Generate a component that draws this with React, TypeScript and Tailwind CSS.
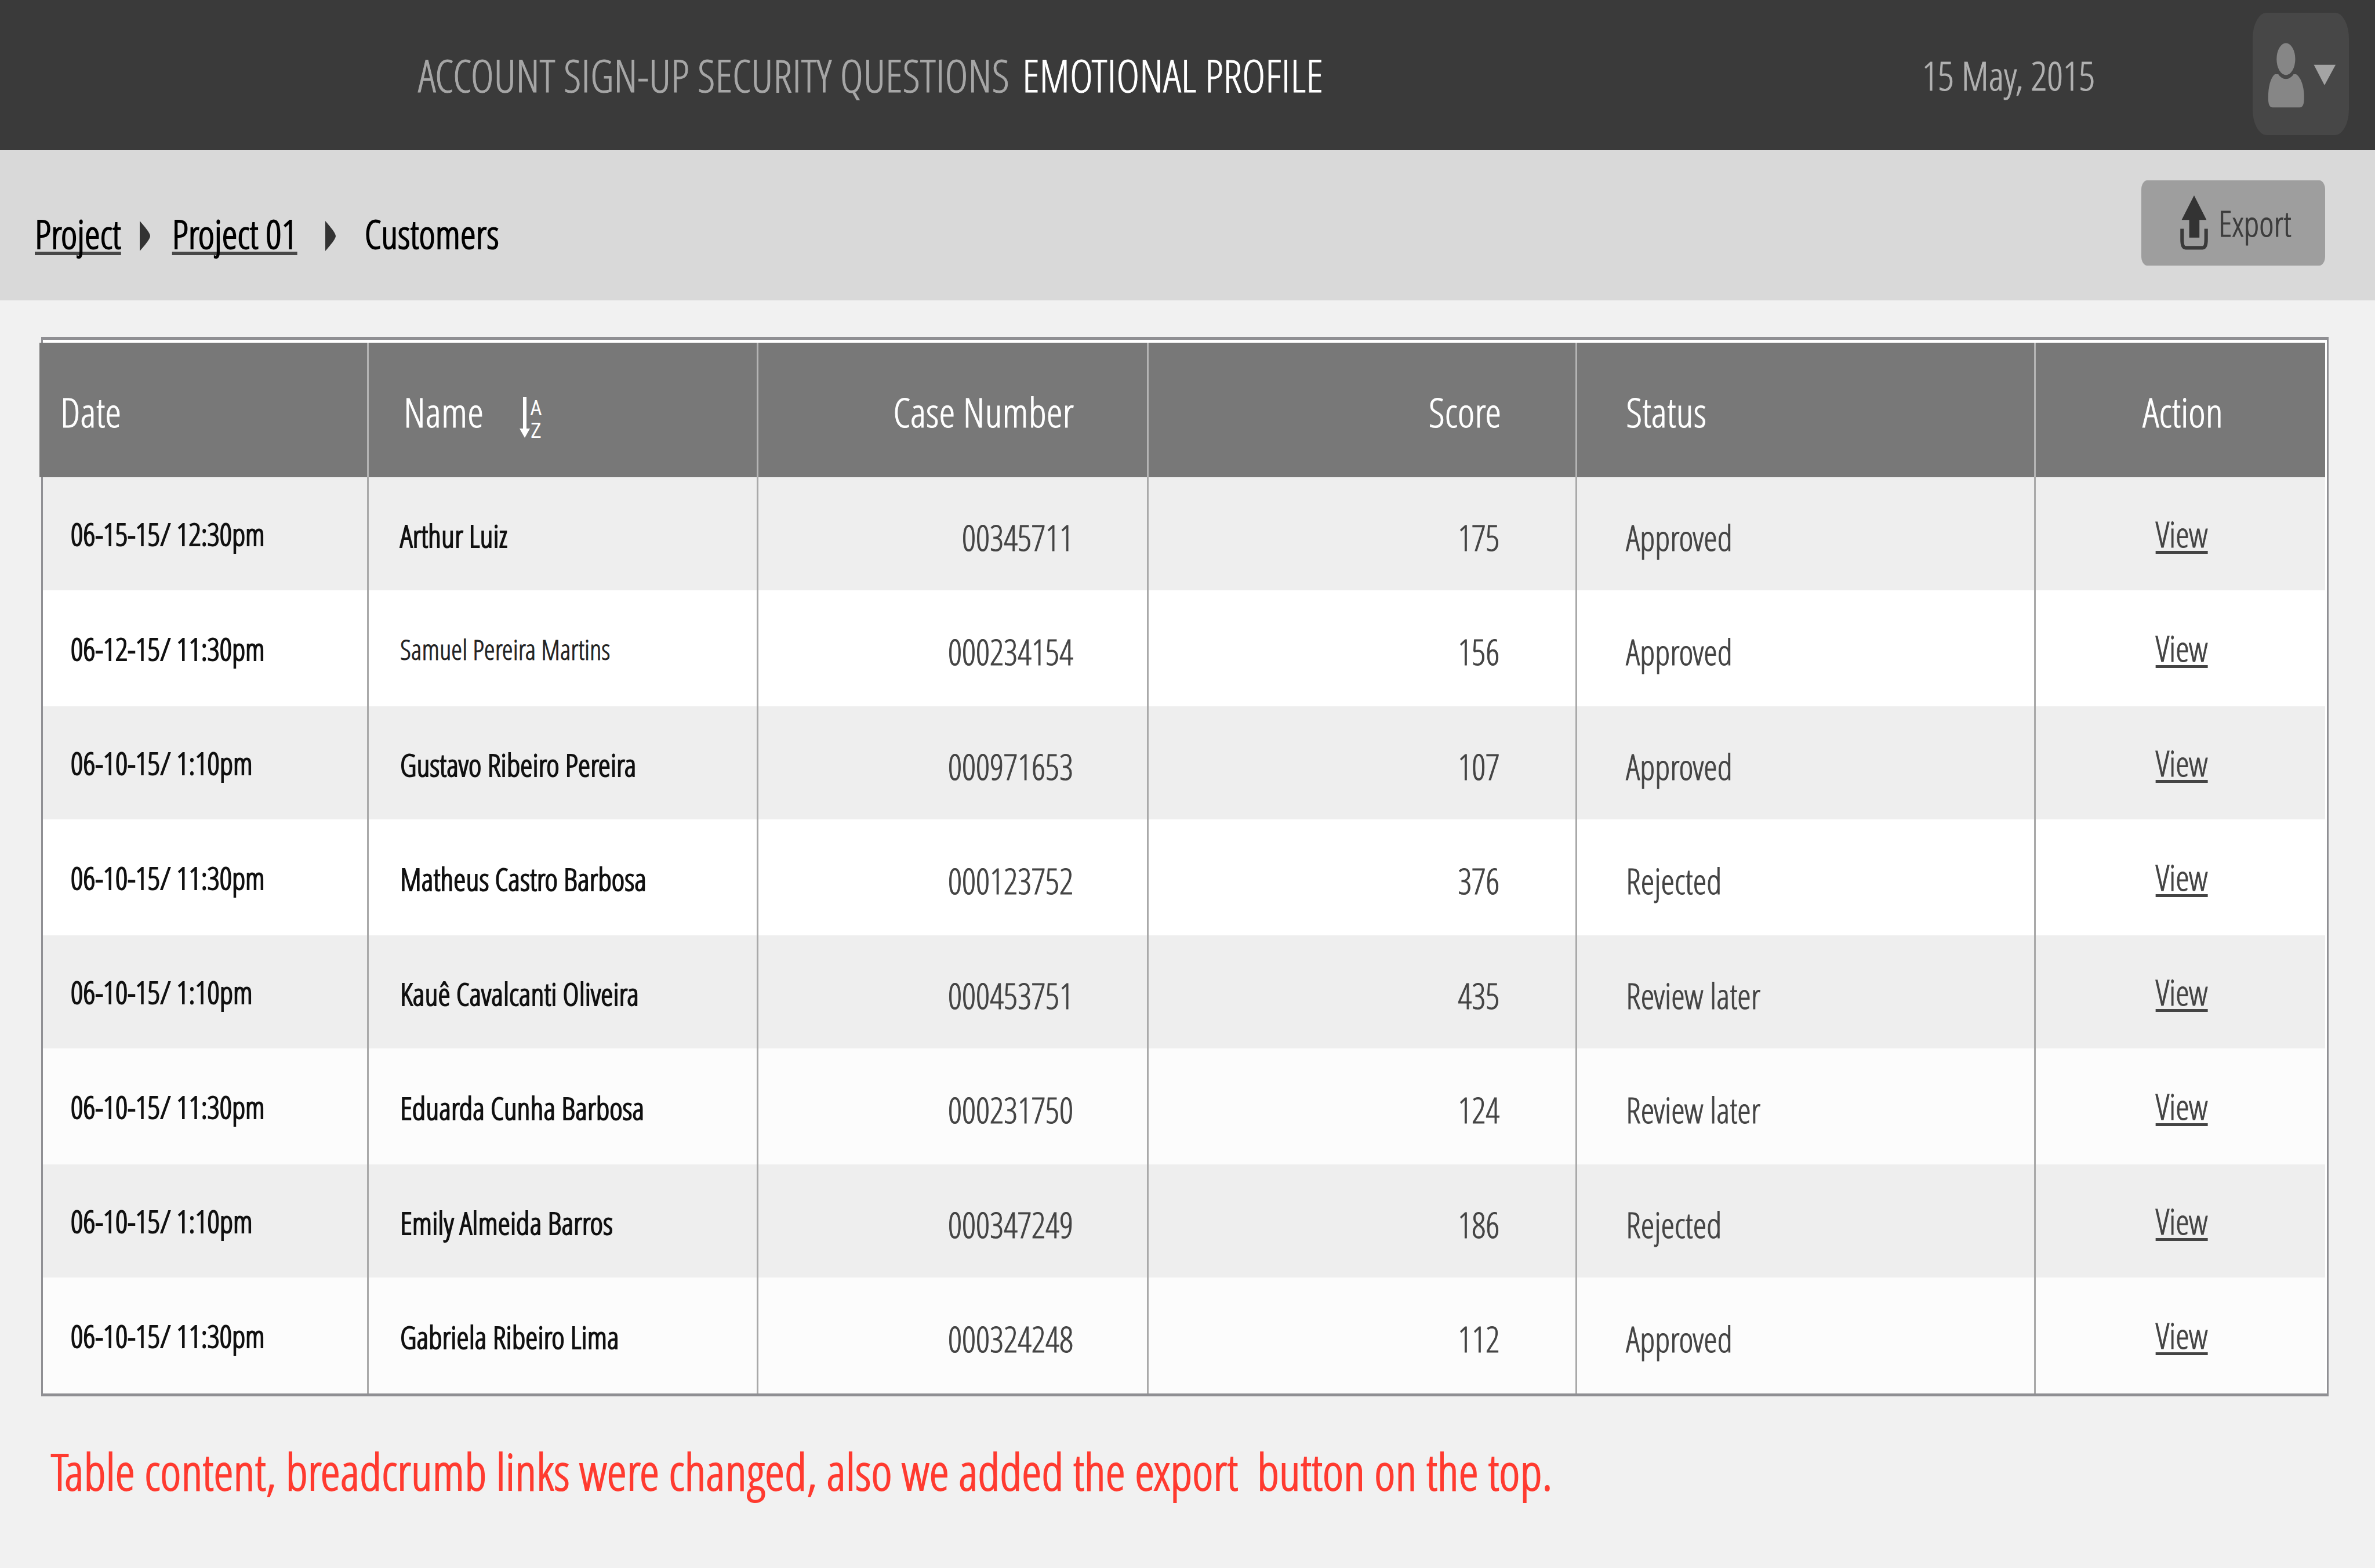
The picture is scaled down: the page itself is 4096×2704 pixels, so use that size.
import clsx from 'clsx'

type Customer = {
  id: number
  date: string
  name: string
  caseNumber: string
  score: number
  status: string
}

const customers: Customer[] = [
  { id: 1, date: '06-15-15/ 12:30pm', name: 'Arthur Luiz', caseNumber: '00345711', score: 175, status: 'Approved' },
  { id: 2, date: '06-12-15/ 11:30pm', name: 'Samuel Pereira Martins', caseNumber: '000234154', score: 156, status: 'Approved' },
  { id: 3, date: '06-10-15/ 1:10pm', name: 'Gustavo Ribeiro Pereira', caseNumber: '000971653', score: 107, status: 'Approved' },
  { id: 4, date: '06-10-15/ 11:30pm', name: 'Matheus Castro Barbosa', caseNumber: '000123752', score: 376, status: 'Rejected' },
  { id: 5, date: '06-10-15/ 1:10pm', name: 'Kauê Cavalcanti Oliveira', caseNumber: '000453751', score: 435, status: 'Review later' },
  { id: 6, date: '06-10-15/ 11:30pm', name: 'Eduarda Cunha Barbosa', caseNumber: '000231750', score: 124, status: 'Review later' },
  { id: 7, date: '06-10-15/ 1:10pm', name: 'Emily Almeida Barros', caseNumber: '000347249', score: 186, status: 'Rejected' },
  { id: 8, date: '06-10-15/ 11:30pm', name: 'Gabriela Ribeiro Lima', caseNumber: '000324248', score: 112, status: 'Approved' },
]

// Table columns
const columns = [
  { header: 'Date', width: 'w-[14.28%]', className: 'text-left pl-[30px]' },
  { header: 'Name', width: 'w-[17.07%]', className: 'text-left pl-[60px]' },
  { header: 'Case Number', width: 'w-[17.10%]', className: 'text-right pr-[126px]' },
  { header: 'Score', width: 'w-[18.78%]', className: 'text-right pr-[128px]' },
  { header: 'Status', width: 'w-[20.10%]', className: 'text-left pl-[84px]' },
  { header: 'Action', width: '', className: 'text-center pl-2' },
]

const UserIcon = () => (
  <svg viewBox="0 0 217 275" className="w-full h-full" aria-hidden="true">
    <path d="M50 138 L98 138 C110 146 116 168 116 190 C116 204 114 213 106 213 L45 213 C37 213 35 204 35 190 C35 168 40 146 50 138 Z" fill="#868686" />
    <ellipse cx="75" cy="106" rx="26" ry="43" fill="#474747" />
    <ellipse cx="75" cy="104" rx="21" ry="36" fill="#868686" />
    <path d="M138 117 L187 117 L162 163 Z" fill="#a4a4a4" />
  </svg>
)

const ExportIcon = () => (
  <svg viewBox="0 0 62 124" className="w-12 h-[95px]" aria-hidden="true">
    <path d="M31 0 L59 55 L43 55 L43 95 L20 95 L20 55 L3 55 Z" fill="#333" />
    <path d="M4 75 L4 100 Q4 118 12 118 L50 118 Q58 118 58 100 L58 75" fill="none" stroke="#3a3a3a" strokeWidth="8" />
  </svg>
)

// arrow with the A over the Z beside it
const SortIcon = () => (
  <svg viewBox="0 0 42 100" className="w-[42px] h-[100px]" aria-hidden="true">
    <path d="M6 14 L12 14 L12 68 L18 68 L9 84 L0 68 L6 68 Z" fill="#fff" />
    <text x="18" y="45" fontSize="36" fill="#fff" className="font-['Roboto_Condensed',sans-serif]">A</text>
    <text x="19" y="84" fontSize="36" fill="#fff" className="font-['Roboto_Condensed',sans-serif]">Z</text>
  </svg>
)

const Separator = ({ className }: { className?: string }) => (
  <svg viewBox="0 0 18 52" className={clsx('w-[18px] h-[52px]', className)} aria-hidden="true">
    <path d="M0 0 C5 6 18 20 18 26 C18 32 5 46 0 52 Z" fill="#333" />
  </svg>
)

const Header = () => (
  <header className="flex items-center h-[259px] pr-[45px] bg-[#3a3a3a]">
    <nav className="flex gap-[22px] ml-[17.8%] text-[77px] leading-none text-[#a6a6a6] whitespace-nowrap [-webkit-text-stroke:1px]">
      <a href="#signup">ACCOUNT SIGN-UP SECURITY QUESTIONS</a>
      <a href="#profile" aria-current="page" className="text-white">EMOTIONAL PROFILE</a>
    </nav>
    <time dateTime="2015-05-15" className="ml-auto mr-[272px] text-[69px] leading-none text-[#b0b0b0] [-webkit-text-stroke:1px]">15 May, 2015</time>
    <button aria-label="Account menu" className="w-[166px] h-[211px] mb-1 rounded-[24px/44px] bg-[#474747]">
      <UserIcon />
    </button>
  </header>
)

const Breadcrumb = () => (
  <div className="flex items-center justify-between h-[259px] pl-[60px] pr-[86px] bg-[#d9d9d9]">
    <nav aria-label="Breadcrumb" className="flex items-center pt-7 text-[68px] leading-none text-black [-webkit-text-stroke:2px_black]">
      <a href="#projects" className="underline decoration-[6px] decoration-[#484848] underline-offset-[5px] [text-decoration-skip-ink:none]">Project</a>
      <Separator className="mt-2 ml-[32px] mr-[38px]" />
      <a href="#project-01" className="underline decoration-[6px] decoration-[#484848] underline-offset-[5px] [text-decoration-skip-ink:none]">Project 01</a>
      <Separator className="mt-2 ml-[48px] mr-[50px]" />
      <span>Customers</span>
    </nav>
    <button className="flex items-center gap-[18px] w-[317px] h-[147px] mb-2 pl-[67px] rounded-[10px/16px] bg-[#9e9e9e] text-[61px] leading-none text-[#3c3c3c] [-webkit-text-stroke:1px]">
      <ExportIcon />
      Export
    </button>
  </div>
)

const App = () => {
  const renderRow = (item: Customer, i: number) => (
    <tr
      key={item.id}
      className={clsx(
        i % 2 === 0 ? 'h-[195px] bg-[#eee]' : 'h-[200px]',
        i % 2 === 1 && (i < 4 ? 'bg-white' : 'bg-[#fcfcfc]'),
      )}
    >
      <td className="border-r-[3px] border-[#a9a9a9] pl-[48px] text-[53px] text-[#111] [-webkit-text-stroke:2px]">{item.date}</td>
      <td className={clsx('border-r-[3px] border-[#a9a9a9] pt-1 pl-[54px]', i === 1 ? 'text-[48px] text-[#222]' : 'text-[54px] text-[#111] [-webkit-text-stroke:2px]')}>{item.name}</td>
      <td className="border-r-[3px] border-[#a9a9a9] pt-3 pr-[127px] text-right">{item.caseNumber}</td>
      <td className="border-r-[3px] border-[#a9a9a9] pt-3 pr-[131px] text-right">{item.score}</td>
      <td className="border-r-[3px] border-[#a9a9a9] pt-3 pl-[84px]">{item.status}</td>
      <td className="text-center pl-1">
        <a href={`#customers/${item.id}`} className="underline decoration-[5px] underline-offset-[6px]">View</a>
      </td>
    </tr>
  )

  return (
    <div className="min-h-screen bg-[#f1f1f1] font-['Open_Sans_Condensed_Light','Open_Sans_Condensed',sans-serif]">
      {/* TOP */}
      <Header />
      <Breadcrumb />
      {/* LIST */}
      <main>
        <div className="mt-[63px] ml-[71px] mr-[80px] border-x-[3px] border-y-[5px] border-[#8f8f93] bg-white pt-[5px] pr-[3px]">
          <table className="w-full table-fixed border-separate border-spacing-0 leading-none text-[60px] text-[#444] [-webkit-text-stroke:1px]">
            <colgroup>
              {columns.map((col) => (
                <col key={col.header} className={col.width} />
              ))}
            </colgroup>
            <thead>
              <tr className="h-[232px] bg-[#787878] text-[71px] text-white">
                {columns.map((col) => (
                  <th
                    key={col.header}
                    className={clsx(
                      'pt-1 font-normal border-r-[3px] border-[#b4b4b4] first:shadow-[-6px_0_0_#787878] last:border-r-0',
                      col.className,
                    )}
                  >
                    {col.header === 'Name' ? (
                      <span className="flex items-center gap-[62px]">
                        {col.header}
                        <button aria-label="Sort by name" className="-mb-6 [-webkit-text-stroke:0px]">
                          <SortIcon />
                        </button>
                      </span>
                    ) : (
                      col.header
                    )}
                  </th>
                ))}
              </tr>
            </thead>
            <tbody>{customers.map(renderRow)}</tbody>
          </table>
        </div>
        <p className="mt-[68px] pl-[88px] text-[87px] leading-[120px] text-[#ff3b30] whitespace-pre [-webkit-text-stroke:2px]">
          Table content, breadcrumb links were changed, also we added the export  button on the top.
        </p>
      </main>
    </div>
  )
}

export default App
